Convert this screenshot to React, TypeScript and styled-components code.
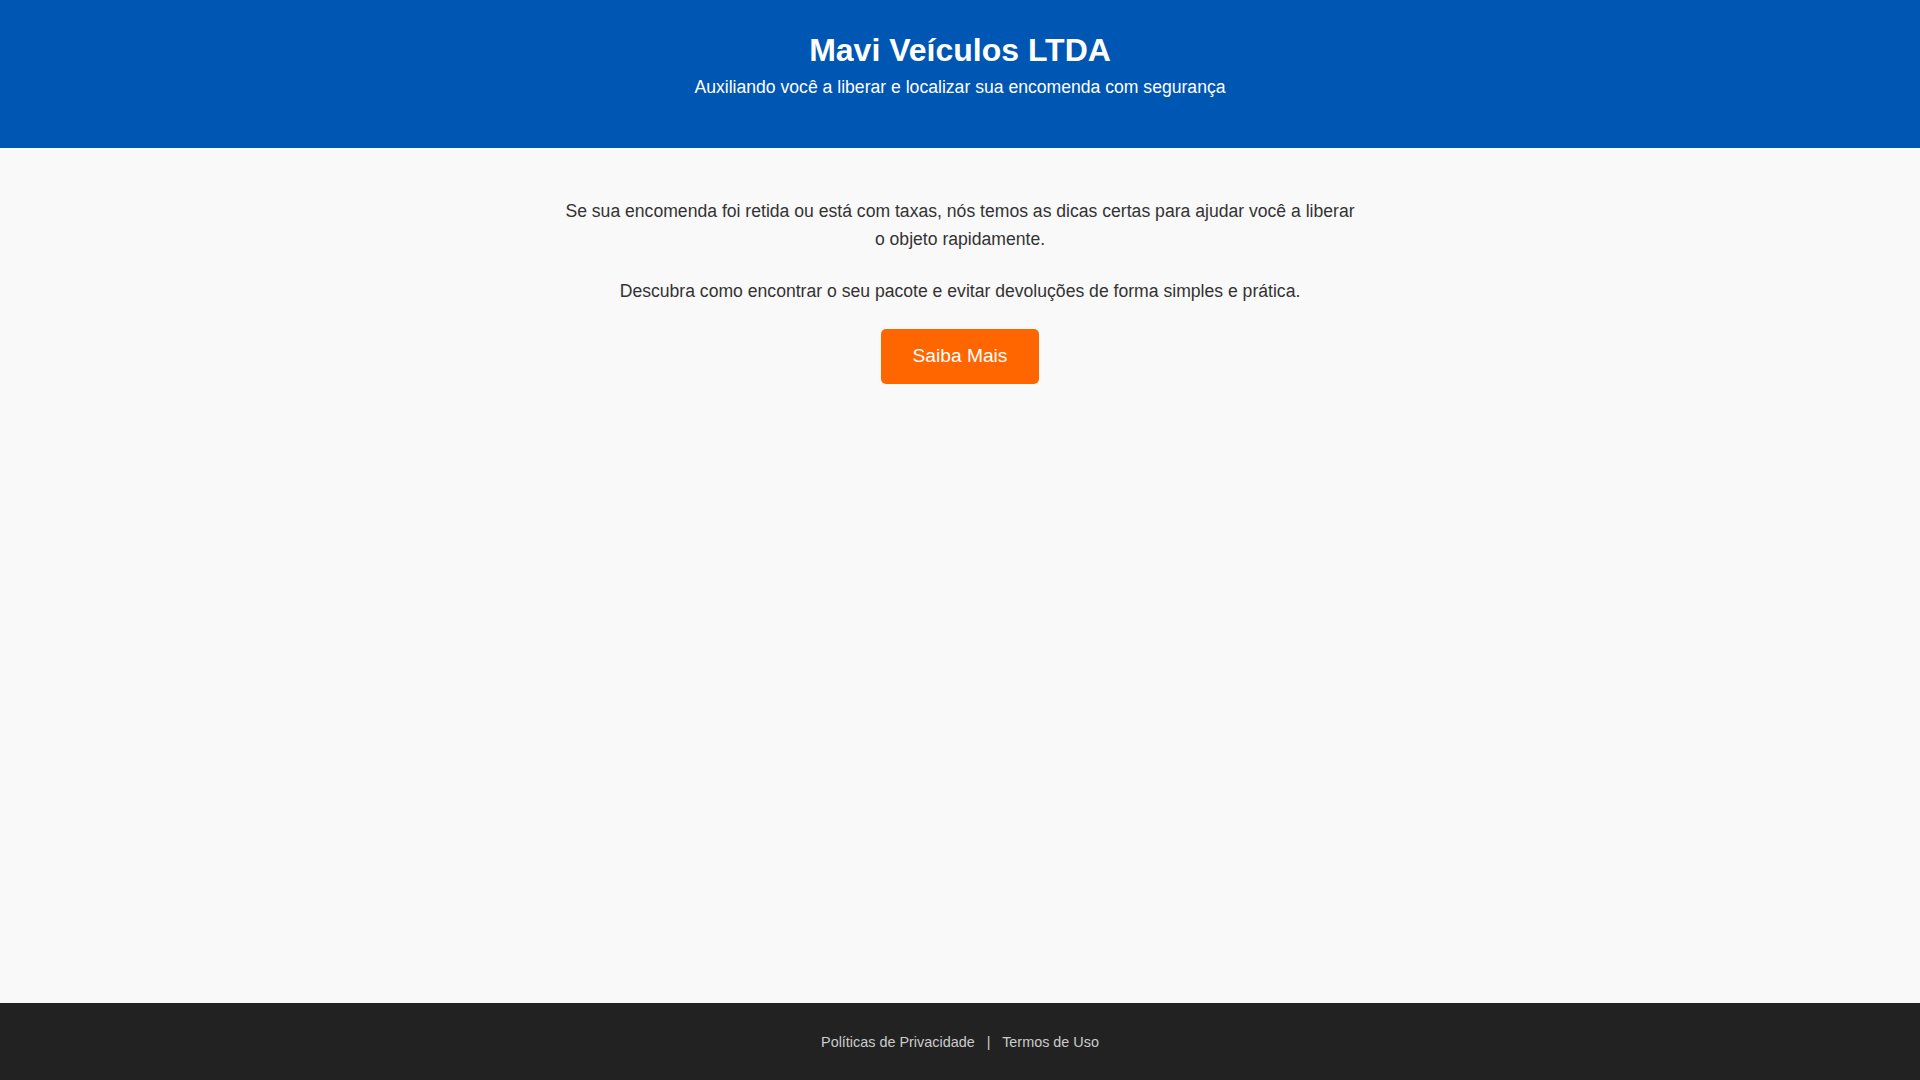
import React from 'react'
import styled, { createGlobalStyle } from 'styled-components'

const GlobalStyle = createGlobalStyle`
    * {
        box-sizing: border-box;
    }
    body {
        margin: 0;
        font-family: "Liberation Sans", Arial, sans-serif;
        background-color: #f9f9f9;
        color: #333;
    }
`

const SPage = styled.div`
    min-height: 100vh;
    display: flex;
    flex-direction: column;
`

const SHeader = styled.header`
    background-color: #0056b3;
    color: #fff;
    text-align: center;
    padding: 32px 20px 50px;
`

const STitle = styled.h1`
    margin: 0;
    font-size: 32px;
    font-weight: 700;
`

const SSubtitle = styled.p`
    margin: 8px 0 0;
    font-size: 17.6px;
`

const SMain = styled.main`
    flex: 1;
    padding: 49px 20px 50px;
    text-align: center;
`

const SContent = styled.div`
    max-width: 800px;
    margin: 0 auto;
`

const SText = styled.p`
    margin: 0 0 24px;
    font-size: 17.6px;
    line-height: 1.6;
`

const SButton = styled.a`
    display: inline-block;
    background-color: #ff6600;
    color: #fff;
    font-size: 19.2px;
    padding: 16px 32px 17px;
    border-radius: 5px;
    text-decoration: none;
    cursor: pointer;
`

const SFooter = styled.footer`
    background-color: #222;
    color: #ccc;
    text-align: center;
    padding: 31px 20px 30px;
    font-size: 14.4px;
`

const SLink = styled.a`
    color: #ccc;
    text-decoration: none;
`

const SSep = styled.span`
    margin: 0 8px;
`

const App = () => {
    return (
        <SPage>
            <GlobalStyle />
            <SHeader>
                <STitle>Mavi Veículos LTDA</STitle>
                <SSubtitle>Auxiliando você a liberar e localizar sua encomenda com segurança</SSubtitle>
            </SHeader>
            <SMain>
                <SContent>
                    <SText>
                        Se sua encomenda foi retida ou está com taxas, nós temos as dicas certas para ajudar você a liberar o objeto rapidamente.
                    </SText>
                    <SText>
                        Descubra como encontrar o seu pacote e evitar devoluções de forma simples e prática.
                    </SText>
                    <SButton href="#">Saiba Mais</SButton>
                </SContent>
            </SMain>
            <SFooter>
                <SLink href="#">Políticas de Privacidade</SLink> <SSep>|</SSep> <SLink href="#">Termos de Uso</SLink>
            </SFooter>
        </SPage>
    )
}

export default App
